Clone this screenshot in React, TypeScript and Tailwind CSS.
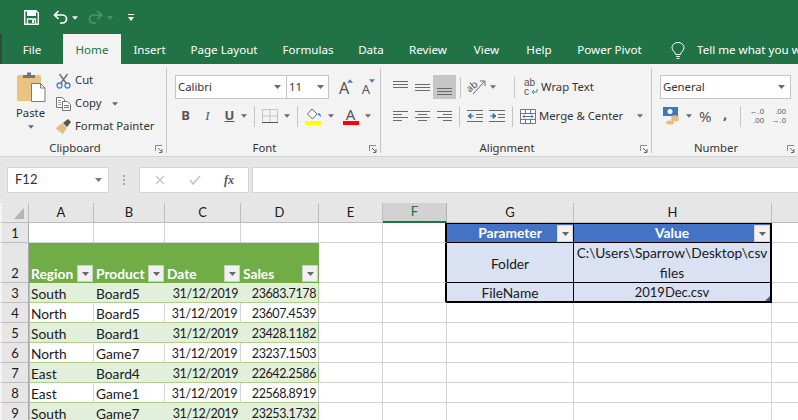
import React from 'react';

const ROWS = [
  ['South', 'Board5', '31/12/2019', '23683.7178'],
  ['North', 'Board5', '31/12/2019', '23607.4539'],
  ['South', 'Board1', '31/12/2019', '23428.1182'],
  ['North', 'Game7', '31/12/2019', '23237.1503'],
  ['East', 'Board4', '31/12/2019', '22642.2586'],
  ['East', 'Game1', '31/12/2019', '22568.8919'],
  ['South', 'Game7', '31/12/2019', '23253.1732'],
];

const TABS = [
  { name: 'Insert', w: 'w-[57px]' },
  { name: 'Page Layout', w: 'w-[92px]' },
  { name: 'Formulas', w: 'w-[76px]' },
  { name: 'Data', w: 'w-[50px]' },
  { name: 'Review', w: 'w-[64px]' },
  { name: 'View', w: 'w-[53px]' },
  { name: 'Help', w: 'w-[52px]' },
  { name: 'Power Pivot', w: 'w-[89px]' },
];

const Caret = ({ className = '', color = '#6a6a6a' }: { className?: string; color?: string }) => (
  <svg width="7" height="4" viewBox="0 0 7 4" className={`shrink-0 ${className}`}>
    <path d="M0 0h7L3.5 4z" fill={color} />
  </svg>
);

const Launcher = () => (
  <svg width="8" height="8" viewBox="0 0 8 8" className="shrink-0">
    <path d="M.5 6V.5H7" fill="none" stroke="#8a8a8a" />
    <path d="M3 3l4 4M7 4v3.5H4" fill="none" stroke="#666" />
  </svg>
);

const VSep = ({ className = '' }: { className?: string }) => <div className={`w-px h-[21px] bg-[#c6c6c6] shrink-0 ${className}`} />;

// horizontal text-alignment glyph, each line is [x1, y, x2]
const Lines = ({ lines, width = 15, height = 12 }: { lines: number[][]; width?: number; height?: number }) => (
  <svg width={width} height={height} viewBox={`0 0 ${width} ${height}`} className="shrink-0">
    {lines.map((l, i) => (
      <rect key={i} x={l[0]} y={l[1]} width={l[2] - l[0]} height="1" fill="#6a6a6a" />
    ))}
  </svg>
);

const GroupLabel = ({ label }: { label: string }) => (
  <div className="h-[15px] flex items-end text-[11.3px] leading-none text-[#333] pr-[3px]">
    <span className="flex-1 text-center pr-[7px]">{label}</span>
    <Launcher />
  </div>
);

const Group = ({ label, width, children }: { label: string; width: string; children: React.ReactNode }) => (
  <div className={`${width} h-[85px] border-r border-[#c6c6c6] flex flex-col shrink-0`}>
    <div className="flex-1">{children}</div>
    <GroupLabel label={label} />
  </div>
);

const FilterBtn = ({ light }: { light?: boolean }) => (
  <div className={`w-[16px] h-[17px] border flex items-center justify-center shrink-0 ${light ? 'bg-[#f2f2f2] border-[#d8d8d8]' : 'bg-[#f0f0f0] border-[#c8d0c0]'}`}>
    <Caret color="#666" />
  </div>
);

// Calibri stand-in: Lato runs wide on digits, so numbers get a smaller size
const lato = "font-['Lato',sans-serif] leading-[17px] text-[#1a1a1a]";
const wordSize = 'text-[13.75px]';
const numSize = 'text-[12.5px] tracking-[-0.4px]';

const ColHead = ({ label, active }: { label: string; active?: boolean }) => (
  <div className={`flex items-center justify-center border-r font-['Lato',sans-serif] text-[13px] ${active ? 'bg-[#d2d2d2] border-[#b0b0b0] border-b-2 border-b-[#217346] text-[#217346]' : 'bg-[#e6e6e6] border-[#bdbdbd] border-b border-b-[#bdbdbd] text-[#1a1a1a]'}`}>
    {label}
  </div>
);

const RowHead = ({ n }: { n: number }) => (
  <div className={`bg-[#e6e6e6] border-l-2 border-l-[#f3f3f3] border-r border-r-[#a8a8a8] border-b border-b-[#bdbdbd] flex items-end justify-center text-[13px] ${lato}`}>
    {n}
  </div>
);

const Blank = ({ noRight }: { noRight?: boolean }) => <div className={`bg-white border-b border-[#d4d4d4] ${noRight ? '' : 'border-r'}`} />;

const App: React.FC = () => {
  return (
    <div className="w-[798px] h-[420px] overflow-hidden bg-[#e6e6e6] font-['Noto_Sans',sans-serif]">
      {/* Title bar */}
      <div className="h-[34px] bg-[#217346] flex items-center pl-[24px]">
        <svg width="15" height="15" viewBox="0 0 15 15">
          <path d="M.7.7h11.2l2.4 2.4v11.2H.7z" fill="none" stroke="#fff" strokeWidth="1.4" />
          <rect x="3" y="1" width="9" height="5" fill="#fff" />
          <path d="M3.5 14V9h8v5" fill="none" stroke="#fff" strokeWidth="1.4" />
          <rect x="8" y="10" width="2" height="3" fill="#fff" />
        </svg>
        <svg width="15" height="14" viewBox="0 0 15 14" className="ml-[14px]">
          <path d="M5.5 1L1.5 5l4 4M2 5h7.5a4 4 0 0 1 0 8H7" fill="none" stroke="#fff" strokeWidth="1.7" />
        </svg>
        <Caret color="#e8f0ea" className="ml-[4px] mt-[1px] w-[6px]" />
        <svg width="15" height="14" viewBox="0 0 15 14" className="ml-[10px]">
          <path d="M9.5 1l4 4-4 4M13 5H5.5a4 4 0 0 0 0 8H8" fill="none" stroke="#4f9270" strokeWidth="1.7" />
        </svg>
        <Caret color="#4f9270" className="ml-[4px] mt-[1px] w-[6px]" />
        <svg width="6" height="7" viewBox="0 0 6 7" className="ml-[15px] mt-[1px]">
          <rect width="6" height="1" fill="#fff" />
          <path d="M0 3h6L3 7z" fill="#fff" />
        </svg>
      </div>

      {/* Tab bar */}
      <div className="h-[30px] bg-[#217346] flex items-stretch text-[11.6px] text-white whitespace-nowrap border-l-2 border-[#2e4a3a]">
        <div className="w-[61px] shrink-0 flex items-center justify-center pt-[2px] pr-[1px]">File</div>
        <div className="w-[58px] shrink-0 bg-[#f3f3f3] text-[#217346] flex items-center justify-center pt-[2px]">Home</div>
        {TABS.map((t) => (
          <div key={t.name} className={`${t.w} flex items-center justify-center shrink-0 pt-[2px]`}>
            {t.name}
          </div>
        ))}
        <div className="flex items-center ml-[17px] shrink-0 pt-[2px]">
          <svg width="14" height="17" viewBox="0 0 14 17">
            <path d="M4.5 12.5C4.3 10 1 8.800 1 5.500a6 5 0 0 1 12 0c0 3.300-3.300 4.500-3.500 7z" fill="none" stroke="#fff" />
            <path d="M5 14.500h4M5.500 16.500h3" stroke="#fff" />
          </svg>
          <span className="ml-[12px]">Tell me what you want to do</span>
        </div>
      </div>

      {/* Ribbon */}
      <div className="h-[93px] bg-[#f3f3f3] border-b border-[#d2d2d2] flex pt-[4px] pl-[2px] text-[11.3px] text-[#333] whitespace-nowrap">
        <Group label="Clipboard" width="w-[165px]">
          <div className="flex">
            <div className="w-[52px] flex flex-col items-center pl-[5px] pt-[3px]">
              <svg width="30" height="31" viewBox="0 0 30 31">
                <rect x="1" y="4" width="24" height="26" rx="2" fill="#eac282" />
                <path d="M7 7V4h4V1.500h4V4h4v3z" fill="#757575" />
                <path d="M15.500 12.500h9l4.500 4.500v13.500H15.500z" fill="#fff" stroke="#7a7a7a" />
                <path d="M24.500 12.500V17H29" fill="none" stroke="#7a7a7a" />
              </svg>
              <span className="mt-[4px] leading-[14px]">Paste</span>
              <Caret className="mt-[5px] w-[6px]" />
            </div>
            <div className="flex flex-col pl-[2px] pt-[1px]">
              <div className="h-[23px] flex items-center">
                <svg width="15" height="16" viewBox="0 0 15 16" className="mr-[4px]">
                  <path d="M3.500 1l6.500 9M11.500 1L5 10" stroke="#6f6f6f" strokeWidth="1.400" />
                  <circle cx="3.500" cy="12.500" r="2.500" fill="none" stroke="#4a80c0" strokeWidth="1.300" />
                  <circle cx="11.500" cy="12.500" r="2.500" fill="none" stroke="#4a80c0" strokeWidth="1.300" />
                </svg>
                Cut
              </div>
              <div className="h-[23px] flex items-center">
                <svg width="15" height="14" viewBox="0 0 15 14" className="mr-[4px]">
                  <path d="M6.500 10.500H.5V.5h6l2 2V4" fill="#fff" stroke="#777" />
                  <path d="M6.500 4.500h5l3 3v6h-8z" fill="#fff" stroke="#777" />
                  <path d="M8 8.500h5M8 10.500h5" stroke="#4a80c0" />
                  <path d="M2 3.500h3M2 5.500h3M2 7.500h3" stroke="#999" />
                </svg>
                Copy
                <Caret className="ml-[11px] mt-[1px] w-[6px]" />
              </div>
              <div className="h-[23px] flex items-center">
                <svg width="15" height="15" viewBox="0 0 15 15" className="mr-[4px]">
                  <path d="M0 9l6-5 5 5-4 6-2-1-1-2-1 1-1-2-1 0z" fill="#e6bd7c" />
                  <path d="M7 4l5-4 3 3-4 5z" fill="#555" />
                </svg>
                Format Painter
              </div>
            </div>
          </div>
        </Group>

        <Group label="Font" width="w-[214px]">
          <div className="pl-[8px] pt-[7px]">
            <div className="flex items-center h-[24px]">
              <div className="w-[111px] h-full bg-white border border-[#c6c6c6] flex items-center justify-between pl-[2px] pr-[5px] border-r-0">
                Calibri
                <Caret />
              </div>
              <div className="w-[43px] h-full bg-white border border-[#c6c6c6] flex items-center justify-between pl-[2px] pr-[4px]">
                11
                <Caret />
              </div>
              <div className="relative w-[18px] h-full ml-[6px] text-[16px] leading-[26px] text-[#555] text-center">
                A
                <Caret color="#4a80c0" className="absolute right-0 top-[4px] w-[6px] rotate-180" />
              </div>
              <div className="relative w-[18px] h-full ml-[4px] text-[13px] leading-[28px] text-[#555] text-center">
                A
                <Caret color="#4a80c0" className="absolute right-0 top-[4px] w-[6px]" />
              </div>
            </div>
            <div className="flex items-center h-[22px] mt-[6px] text-[13px] text-[#555]">
              <span className="w-[13px] ml-[4px] text-center font-bold">B</span>
              <span className="w-[13px] ml-[9px] text-center italic font-['Liberation_Serif',serif]">I</span>
              <span className="w-[13px] ml-[9px] text-center underline font-bold">U</span>
              <Caret className="ml-[5px] w-[6px]" />
              <VSep className="ml-[7px]" />
              <svg width="16" height="14" viewBox="0 0 16 14" className="ml-[7px]">
                <path d="M.5.5h15v13H.5zM8 .5v13M.5 7h15" fill="none" stroke="#999" strokeDasharray="1 1" />
                <path d="M0 13.500h16" stroke="#555" />
              </svg>
              <Caret className="ml-[6px] w-[6px]" />
              <VSep className="ml-[7px]" />
              <svg width="17" height="17" viewBox="0 0 17 17" className="ml-[7px]">
                <path d="M7 1l5 5-4.500 5-5-5z" fill="#fff" stroke="#666" />
                <path d="M13 5c2 0 3 1.500 3 4-1-1-2-2-3-2z" fill="#4a80c0" />
                <rect y="13" width="16" height="4" fill="#ffff00" />
              </svg>
              <Caret className="ml-[6px] w-[6px]" />
              <div className="w-[17px] ml-[8px] flex flex-col items-center">
                <span className="text-[15px] leading-[14px] text-[#555]">A</span>
                <div className="w-[16px] h-[4px] bg-[#ff0000]" />
              </div>
              <Caret className="ml-[6px] w-[6px]" />
            </div>
          </div>
        </Group>

        <Group label="Alignment" width="w-[271px]">
          <div className="pl-[12px] pt-[7px]">
            <div className="flex items-center h-[24px]">
              <div className="mb-[6px]"><Lines lines={[[0, 1, 15], [0, 4, 15], [0, 7, 15]]} height={9} /></div>
              <div className="ml-[7px]"><Lines lines={[[0, 1, 15], [0, 4, 15], [0, 7, 15]]} height={9} /></div>
              <div className="ml-[3px] w-[23px] h-[24px] bg-[#c6c6c6] flex items-end justify-center pb-[3px]">
                <Lines lines={[[0, 1, 15], [0, 4, 15], [0, 7, 15]]} height={9} />
              </div>
              <VSep className="ml-[4px]" />
              <svg width="18" height="16" viewBox="0 0 18 16" className="ml-[7px] overflow-visible">
                <g transform="rotate(-40 6 10)">
                  <text x="0" y="10" fontSize="10" fill="#555">ab</text>
                </g>
                <path d="M5 15L16 3" stroke="#666" />
                <path d="M12 2h5v5" fill="none" stroke="#666" />
              </svg>
              <Caret className="ml-[4px] w-[6px]" />
              <VSep className="ml-[18px]" />
              <div className="w-[14px] ml-[9px] text-[10px] leading-[9px] font-['Liberation_Sans',sans-serif] text-[#555] relative">
                <div>ab</div>
                <div>c</div>
                <svg width="7" height="7" viewBox="0 0 7 7" className="absolute right-0 bottom-0">
                  <path d="M6 0v3H1M3 1L1 3l2 2" fill="none" stroke="#4a80c0" />
                </svg>
              </div>
              <span className="ml-[3px]">Wrap Text</span>
            </div>
            <div className="flex items-center h-[22px] mt-[6px]">
              <Lines lines={[[0, 1, 15], [0, 4, 9], [0, 7, 15], [0, 10, 9]]} />
              <div className="ml-[7px]"><Lines lines={[[0, 1, 15], [3, 4, 12], [0, 7, 15], [3, 10, 12]]} /></div>
              <div className="ml-[7px]"><Lines lines={[[0, 1, 15], [6, 4, 15], [0, 7, 15], [6, 10, 15]]} /></div>
              <VSep className="ml-[7px]" />
              <svg width="17" height="12" viewBox="0 0 17 12" className="ml-[7px]">
                <path d="M0 .5h16M9 4.500h7M9 7.500h7M0 11.500h16" stroke="#6a6a6a" />
                <path d="M7 6H2M4 3.500L1 6l3 2.500z" fill="#3f78b8" stroke="#3f78b8" />
              </svg>
              <svg width="17" height="12" viewBox="0 0 17 12" className="ml-[5px]">
                <path d="M0 .5h16M9 4.500h7M9 7.500h7M0 11.500h16" stroke="#6a6a6a" />
                <path d="M1 6h5M4 3.500L7 6 4 8.500z" fill="#3f78b8" stroke="#3f78b8" />
              </svg>
              <VSep className="ml-[6px]" />
              <svg width="16" height="15" viewBox="0 0 16 15" className="ml-[7px]">
                <path d="M.5.5h15v14H.5zM.5 4.500h15M.5 10.500h15M5.500.5v4M10.500.5v4M5.500 10.500v4M10.500 10.500v4" fill="#fff" stroke="#777" />
                <path d="M3 7.500h10M5 5.500l-2 2 2 2M11 5.500l2 2-2 2" fill="none" stroke="#3f78b8" />
              </svg>
              <span className="ml-[3px]">Merge &amp; Center</span>
              <Caret className="ml-[14px] w-[6px]" />
            </div>
          </div>
        </Group>

        <div className="w-[146px] h-[85px] flex flex-col shrink-0">
          <div className="flex-1 pl-[8px] pt-[7px]">
            <div className="w-[131px] h-[24px] bg-white border border-[#c6c6c6] flex items-center justify-between pl-[2px] pr-[5px]">
              General
              <Caret />
            </div>
            <div className="flex items-center h-[22px] mt-[6px]">
              <svg width="17" height="18" viewBox="0 0 17 18" className="ml-[3px]">
                <rect width="15" height="9" fill="#3f78b8" />
                <circle cx="7" cy="4.500" r="2.500" fill="#fff" />
                <ellipse cx="12" cy="10" rx="4" ry="1.800" fill="#e6bd7c" />
                <ellipse cx="12" cy="12.500" rx="4" ry="1.800" fill="#e6bd7c" />
                <ellipse cx="7" cy="15.500" rx="4" ry="2" fill="#e6bd7c" />
              </svg>
              <Caret className="ml-[6px] w-[6px]" />
              <span className="ml-[7px] w-[14px] text-[15px] leading-none text-[#555]">%</span>
              <span className="ml-[10px] w-[6px] text-[15px] font-bold leading-none text-[#555] mb-[5px]">,</span>
              <VSep className="ml-[11px]" />
              <div className="ml-[7px] w-[16px] flex flex-col items-end text-[7.8px] leading-[9px] font-['Liberation_Sans',sans-serif] text-[#555]">
                <span><span className="text-[#3f78b8]">←</span>.0</span>
                <span>.00</span>
              </div>
              <div className="ml-[6px] w-[16px] flex flex-col items-end text-[7.8px] leading-[9px] font-['Liberation_Sans',sans-serif] text-[#555]">
                <span>.00</span>
                <span><span className="text-[#3f78b8]">→</span>.0</span>
              </div>
            </div>
          </div>
          <GroupLabel label="Number" />
        </div>
      </div>

      {/* Formula bar */}
      <div className="h-[46px] pt-[10px] pl-[7px] flex items-start text-[#333]">
        <div className="w-[102px] h-[26px] bg-white border border-[#d4d4d4] flex items-center justify-between pl-[7px] pr-[6px] font-['Lato',sans-serif] text-[13px]">
          F12
          <Caret color="#777" />
        </div>
        <div className="w-[2px] h-[10px] mt-[8px] ml-[14px] border-l-2 border-dotted border-[#aaa]" />
        <div className="w-[110px] h-[26px] ml-[14px] bg-white border border-[#d4d4d4] flex items-center">
          <svg width="10" height="10" viewBox="0 0 10 10" className="ml-[15px]">
            <path d="M1 1l8 8M9 1L1 9" stroke="#c4c4c4" strokeWidth="1.400" />
          </svg>
          <svg width="12" height="10" viewBox="0 0 12 10" className="ml-[24px]">
            <path d="M1 5l3 4 7-8" fill="none" stroke="#c4c4c4" strokeWidth="1.600" />
          </svg>
          <span className="ml-[23px] text-[12px] italic font-bold font-['Liberation_Serif',serif] text-[#555]">fx</span>
        </div>
        <div className="flex-1 h-[26px] ml-[3px] bg-white border border-[#d4d4d4] border-r-0" />
      </div>

      {/* Sheet */}
      <div className="grid grid-cols-[29px_65px_71px_76px_78px_64px_64px_127px_198px_26px] grid-rows-[20px_20px_40px_repeat(7,20px)]">
        <div className="bg-[#e6e6e6] border-r border-b border-[#bdbdbd] border-l-2 border-l-[#f3f3f3] flex items-end justify-end pr-[4px] pb-[3px]">
          <svg width="10" height="11" viewBox="0 0 10 11"><path d="M10 0v11H0z" fill="#b4b4b4" /></svg>
        </div>
        {['A', 'B', 'C', 'D', 'E'].map((c) => <ColHead key={c} label={c} />)}
        <ColHead label="F" active />
        <ColHead label="G" />
        <ColHead label="H" />
        <div className="bg-[#e6e6e6] border-b border-[#bdbdbd]" />

        {/* row 1 */}
        <RowHead n={1} />
        <Blank /><Blank /><Blank /><Blank /><Blank />
        <div className="bg-white border-b border-[#d4d4d4] border-r-2 border-r-black" />
        <div className={`bg-[#4472c4] border-t border-t-black border-b border-b-black border-r border-r-black relative flex items-center justify-center font-['Lato',sans-serif] ${wordSize} text-white font-bold`}>
          Parameter
          <div className="absolute right-0 top-px"><FilterBtn light /></div>
        </div>
        <div className={`bg-[#4472c4] border-t border-t-black border-b border-b-black border-r-2 border-r-black relative flex items-center justify-center font-['Lato',sans-serif] ${wordSize} text-white font-bold`}>
          Value
          <div className="absolute right-0 top-px"><FilterBtn light /></div>
        </div>
        <Blank noRight />

        {/* row 2 */}
        <RowHead n={2} />
        {['Region', 'Product', 'Date', 'Sales'].map((h) => (
          <div key={h} className={`bg-[#70ad47] flex items-end justify-between pl-[2px] pr-px pb-px font-['Lato',sans-serif] leading-[17px] ${wordSize} font-bold text-white`}>
            {h}
            <FilterBtn />
          </div>
        ))}
        <Blank />
        <div className="bg-white border-b border-[#d4d4d4] border-r-2 border-r-black" />
        <div className={`bg-[#d9e1f2] border-b border-r border-black flex items-center justify-center pt-[2px] ${lato} ${wordSize}`}>Folder</div>
        <div className={`bg-[#d9e1f2] border-b border-r-2 border-black flex items-center justify-center text-center pt-px font-['Lato',sans-serif] leading-[20px] text-[#1a1a1a] ${wordSize}`}>
          C:\Users\Sparrow\Desktop\csv files
        </div>
        <Blank noRight />

        {/* rows 3..9 */}
        {ROWS.map((r, i) => {
          const striped = i % 2 === 0;
          const base = `border-b border-b-[#a9d08e] flex items-end ${lato} ${striped ? 'bg-[#e2efda]' : 'bg-white border-r border-r-[#d4d4d4]'}`;
          return (
            <React.Fragment key={i}>
              <RowHead n={i + 3} />
              <div className={`${base} pl-px border-l border-l-[#a9d08e] ${wordSize}`}>{r[0]}</div>
              <div className={`${base} pl-[2px] ${wordSize}`}>{r[1]}</div>
              <div className={`${base} justify-end pr-[3px] ${numSize}`}>{r[2]}</div>
              <div className={`${base} justify-end pr-[2px] border-r border-r-[#a9d08e] ${numSize}`}>{r[3]}</div>
              <Blank />
              {i === 0 ? (
                <>
                  <div className="bg-white border-b border-[#d4d4d4] border-r-2 border-r-black" />
                  <div className={`bg-[#d9e1f2] border-b-2 border-r border-black flex items-end justify-center ${lato} ${wordSize}`}>FileName</div>
                  <div className={`bg-[#d9e1f2] border-b-2 border-r-2 border-black flex items-end justify-center relative ${lato} text-[13px]`}>
                    2019Dec.csv
                    <svg width="5" height="5" viewBox="0 0 5 5" className="absolute right-0 bottom-0"><path d="M5 0v5H0z" fill="#3a5fb0" /></svg>
                  </div>
                </>
              ) : (
                <>
                  <Blank /><Blank /><Blank />
                </>
              )}
              <Blank noRight />
            </React.Fragment>
          );
        })}
      </div>
    </div>
  );
};

export default App;
